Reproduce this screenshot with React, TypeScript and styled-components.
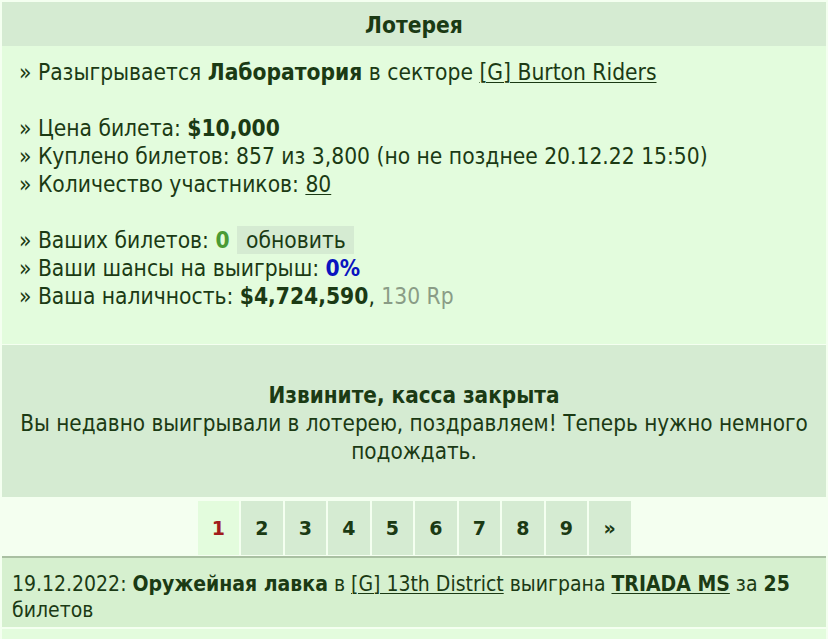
import React from "react";
import styled, { createGlobalStyle } from "styled-components";

const Global = createGlobalStyle`
  html, body {
    margin: 0;
    padding: 0;
    background: #f4fff0;
  }
  body {
    font-family: "DejaVu Sans Condensed", "DejaVu Sans", sans-serif;
    font-size: 22.6px;
    color: #1b3a14;
  }
`;

const pages = ["1", "2", "3", "4", "5", "6", "7", "8", "9", "»"];

const App = () => {
  return (
    <>
      <Global />
      <Page>
        <Header>Лотерея</Header>
        <Info>
          <Line>
            » Разыгрывается <b>Лаборатория</b> в секторе <Link href="#">[G] Burton Riders</Link>
          </Line>
          <Spacer />
          <Line>
            » Цена билета: <b>$10,000</b>
          </Line>
          <Line>» Куплено билетов: 857 из 3,800 (но не позднее 20.12.22 15:50)</Line>
          <Line>
            » Количество участников: <Link href="#">80</Link>
          </Line>
          <Spacer />
          <Line>
            » Ваших билетов: <Accent color="#4b9b35">0</Accent> <RefreshButton>обновить</RefreshButton>
          </Line>
          <Line>
            » Ваши шансы на выигрыш: <Accent color="#0a14c0">0%</Accent>
          </Line>
          <Line>
            » Ваша наличность: <b>$4,724,590</b>, <Muted>130 Rp</Muted>
          </Line>
        </Info>
        <Closed>
          <ClosedTitle>Извините, касса закрыта</ClosedTitle>
          <div>Вы недавно выигрывали в лотерею, поздравляем! Теперь нужно немного подождать.</div>
        </Closed>
        <Pager>
          {pages.map((p, i) => (
            <PageCell key={p} active={i === 0}>
              {p}
            </PageCell>
          ))}
        </Pager>
        <History>
          19.12.2022: <b>Оружейная лавка</b> в <Link href="#">[G] 13th District</Link> выиграна{" "}
          <BoldLink href="#">TRIADA MS</BoldLink> за <b>25</b> билетов
        </History>
        <Tail />
      </Page>
    </>
  );
};

export default App;

const Page = styled.div`
  margin: 2px;
  display: flex;
  flex-direction: column;
  min-height: 637px;
`;

const Header = styled.div`
  background: #d5ebd2;
  height: 44px;
  padding-top: 1px;
  box-sizing: border-box;
  display: flex;
  align-items: center;
  justify-content: center;
  font-weight: bold;
`;

const Info = styled.div`
  background: #e3fcdd;
  padding: 12px 18px 34px 17px;
`;

const Line = styled.div`
  line-height: 28px;
  white-space: nowrap;
`;

const Spacer = styled.div`
  height: 28px;
`;

const Link = styled.a`
  color: #1b3a14;
  text-decoration: underline;
  text-decoration-thickness: 1px;
  text-underline-offset: 2px;
`;

const BoldLink = styled(Link)`
  font-weight: bold;
`;

const Accent = styled.b<{ color: string }>`
  color: ${({ color }) => color};
`;

const Muted = styled.span`
  color: #8a9c86;
`;

const RefreshButton = styled.span`
  display: inline-block;
  background: #d5ebd2;
  padding: 0 8px 0 9px;
  line-height: 28px;
  margin-left: 1px;
`;

const Closed = styled.div`
  background: #d5ebd2;
  margin-top: 1px;
  padding: 36px 10px 32px;
  text-align: center;
  font-size: 22.3px;
  line-height: 28px;
`;

const ClosedTitle = styled.div`
  font-weight: bold;
`;

const Pager = styled.div`
  background: #f4fff0;
  margin-top: 2px;
  padding: 2px 0 1px;
  display: flex;
  justify-content: center;
  gap: 2px;
  border-bottom: 2px solid #a9c0a2;
`;

const PageCell = styled.div<{ active?: boolean }>`
  width: 41.5px;
  height: 54px;
  display: flex;
  align-items: center;
  justify-content: center;
  font-family: "DejaVu Sans", sans-serif;
  font-weight: bold;
  font-size: 19px;
  background: ${({ active }) => (active ? "#e3fcdd" : "#d5ebd2")};
  color: ${({ active }) => (active ? "#a11c1c" : "#1b3a14")};
`;

const History = styled.div`
  background: #d6f0cf;
  padding: 13px 10px 4px;
  font-size: 21px;
  line-height: 26px;
`;

const Tail = styled.div`
  flex: 1;
  background: #e3fcdd;
  margin-top: 2px;
`;
